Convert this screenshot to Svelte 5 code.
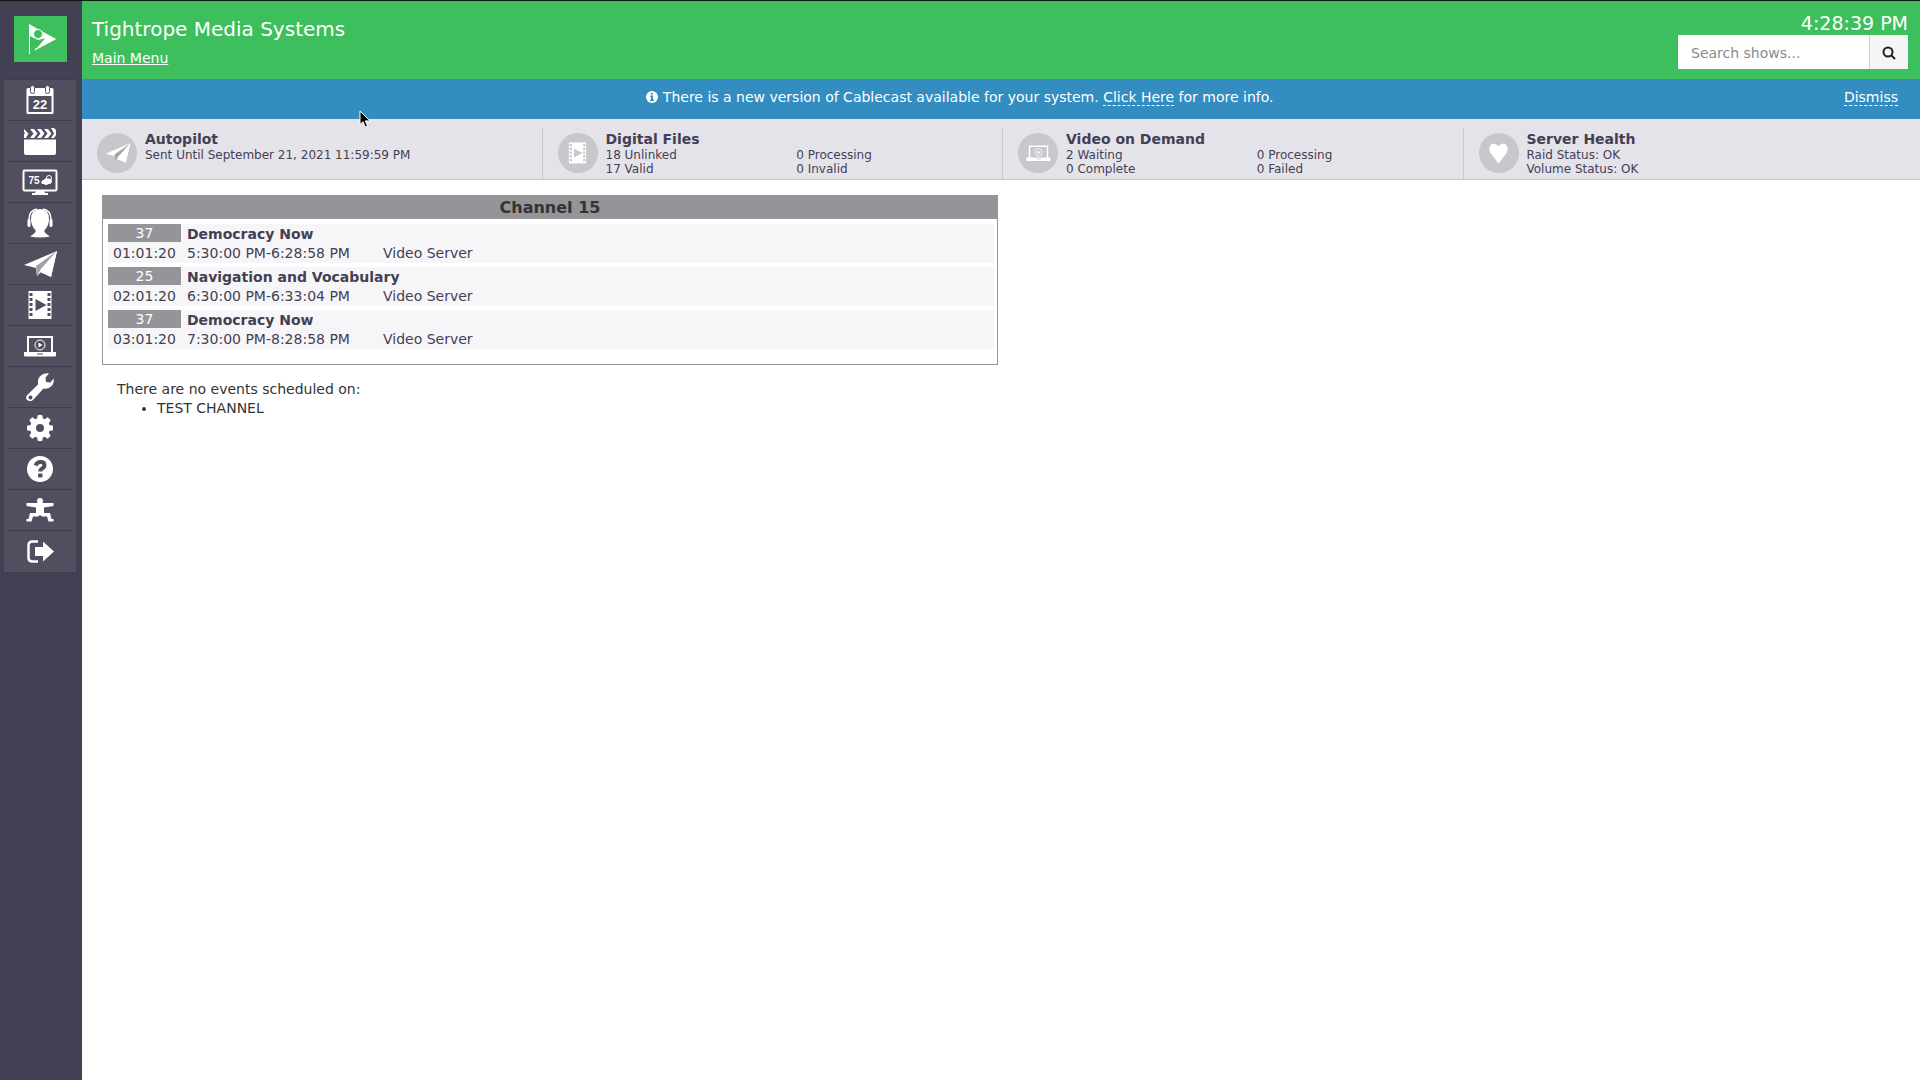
<script lang="ts">
  let search = ""
  let showNotice = true
  const time = "4:28:39 PM"

  const menu = [
    { name: "Schedule", icon: "calendar" },
    { name: "Shows", icon: "clapper" },
    { name: "Channel displays", icon: "display" },
    { name: "Contacts", icon: "person" },
    { name: "Autopilot", icon: "plane" },
    { name: "Digital files", icon: "film" },
    { name: "Video on demand", icon: "laptop" },
    { name: "Maintenance", icon: "wrench" },
    { name: "Settings", icon: "gear" },
    { name: "Help", icon: "help" },
    { name: "Force events", icon: "figure" },
    { name: "Log out", icon: "logout" }
  ]

  const stats = [
    { title: "Autopilot", icon: "plane", wide: true, values: ["Sent Until September 21, 2021 11:59:59 PM"] },
    { title: "Digital Files", icon: "film", wide: false, values: ["18 Unlinked", "0 Processing", "17 Valid", "0 Invalid"] },
    { title: "Video on Demand", icon: "laptop", wide: false, values: ["2 Waiting", "0 Processing", "0 Complete", "0 Failed"] },
    { title: "Server Health", icon: "heart", wide: true, values: ["Raid Status: OK", "Volume Status: OK"] }
  ]

  const events = [
    { id: 37, show: "Democracy Now", countdown: "01:01:20", run: "5:30:00 PM-6:28:58 PM", source: "Video Server" },
    { id: 25, show: "Navigation and Vocabulary", countdown: "02:01:20", run: "6:30:00 PM-6:33:04 PM", source: "Video Server" },
    { id: 37, show: "Democracy Now", countdown: "03:01:20", run: "7:30:00 PM-8:28:58 PM", source: "Video Server" }
  ]
  const emptyChannels = ["TEST CHANNEL"]
  const teeth = [0, 45, 90, 135, 180, 225, 270, 315]
  const holes = [2, 7, 12, 17, 22]
</script>

{#snippet icon(name)}
  <svg class="icon" viewBox="0 0 36 32" aria-hidden="true">
    {#if name === "calendar"}
      <path fill="currentColor" fill-rule="evenodd" d="M6 4h24q1.500 0 1.500 1.500v23q0 1.500-1.500 1.500H6q-1.500 0-1.500-1.500v-23Q4.500 4 6 4zM6.500 12v16h23V12z" />
      <rect class="ring" x="8.500" y="1.500" width="4" height="8" rx="2" />
      <rect class="ring" x="23.500" y="1.500" width="4" height="8" rx="2" />
      <text x="18" y="25" class="day">22</text>
    {:else if name === "clapper"}
      <path fill="currentColor" d="M2 14.500h32V28q0 2-2 2H4q-2 0-2-2z" />
      <path fill="currentColor" d="M2 4l4.500 4.500L4 13H2V9.500L3 8 2 7zM8 4h4l3.500 4.500L12 13H8l3.500-4.500zM15 4h4l3.500 4.500L19 13h-4l3.500-4.500zM22 4h4l3.500 4.500L26 13h-4l3.500-4.500zM29 3h3l2 2v5l-2 3h-3l3-4.500z" />
    {:else if name === "display"}
      <rect x="1.500" y="4.500" width="33" height="20" rx="1" fill="none" stroke="currentColor" stroke-width="2" />
      <path fill="currentColor" d="M14 25h8l1 2h3v2H10v-2h3z" />
      <text x="6.500" y="18" class="temp">75</text>
      <path fill="currentColor" d="M20 18q-2-3 1.500-4 2-2.500 4-1.500 4.500-.5 4.500 2.500-.5 3.500-3.500 3-3 2-4.500 0z" />
      <circle cx="27" cy="12" r="2.500" fill="none" stroke="currentColor" stroke-width="1" />
    {:else if name === "person"}
      <path fill="currentColor" d="M9 12Q9 2 18 2t9 10q0 7-4.500 11v2q2 2.500 5.500 4.500-5 1-10 1t-10-1q3.500-2 5.500-4.500v-2Q9 19 9 12z" />
      <path fill="none" stroke="currentColor" stroke-width="1.500" d="M7 13Q7 3 15 2M29 13Q29 3 21 2" />
      <rect x="5.500" y="12" width="3" height="8" rx="1.500" fill="currentColor" />
      <rect x="27.500" y="12" width="3" height="8" rx="1.500" fill="currentColor" />
    {:else if name === "plane"}
      <path fill="currentColor" d="M2 17L35 3 29 29l-10-5-4 4-1-8z" />
      <path class="fold" d="M35 3L14 18l1 10 4-7z" />
      <path fill="currentColor" d="M35 3L18.500 22l-.5 2L29 29z" />
    {:else if name === "film"}
      <rect x="6.500" y="2" width="23" height="28" fill="currentColor" />
      {#each holes as y}
        <rect class="cut" x="7.500" y={y + 2} width="3" height="3" />
        <rect class="cut" x="25.500" y={y + 2} width="3" height="3" />
      {/each}
      <path class="cut" d="M13.500 10v12L24.500 16z" />
    {:else if name === "laptop"}
      <path fill="currentColor" fill-rule="evenodd" d="M5 6h26v16h3v3.500q0 1-1 1H3q-1 0-1-1V22h3zM7 8v14h22V8z" />
      <circle cx="18" cy="15" r="5" fill="none" stroke="currentColor" stroke-width="1" />
      <path fill="currentColor" d="M16.500 12.500v5l4-2.500z" />
      <rect class="cut" x="15" y="23.500" width="6" height="1" />
    {:else if name === "wrench"}
      <path fill="currentColor" fill-rule="evenodd" d="M4.800 24.500L16 13.500Q15 7 19.500 4q3.500-2.500 7.500-1.500l-3.500 4 .5 4.500 4.500.5 3-4q1 5-2.500 8t-7.500 2L11.500 28.500q-2.500 2.500-5.500 1t-1.200-5zM6.500 26.500a2 2 0 1 0 4 0 2 2 0 1 0-4 0z" />
    {:else if name === "gear"}
      <g fill="currentColor">
        {#each teeth as angle}
          <path d="M14.800 8l1-5h4.400l1 5z" transform="rotate({angle} 18 16)" />
        {/each}
      </g>
      <circle cx="18" cy="16" r="7" fill="none" stroke="currentColor" stroke-width="6" />
    {:else if name === "help"}
      <circle cx="18" cy="16" r="13" fill="currentColor" />
      <path class="ask" d="M13.500 12.500q1.500-3.500 5-3.500 4 0 4 3.200 0 2-2.300 3.200-1.900 1-1.900 3.100" />
      <rect class="cut" x="16" y="20.500" width="4.500" height="4" rx="1" />
    {:else if name === "figure"}
      <circle cx="18" cy="7" r="3" fill="currentColor" />
      <path fill="currentColor" d="M4.500 9h27v3L22 13.500V19h6l1.500 6h2v2.500h-5L25 22.500h-5L18 21l-2 1.500h-5l-1.500 5h-5V25h2L8 19h6v-5.500L4.500 12z" />
    {:else if name === "logout"}
      <path fill="none" stroke="currentColor" stroke-width="2.500" d="M16 6.500h-5.500q-4 0-4 4v12q0 4 4 4H16" />
      <path fill="currentColor" d="M13 12h8V6.500l11 10-11 10V21h-8z" />
    {:else if name === "heart"}
      <path fill="currentColor" d="M18 30L8 17Q4 11 7 6q5-6 11 1 6-7 11-1 3 5-1 11z" />
    {/if}
  </svg>
{/snippet}

<div class="app">
  <nav class="sidebar">
    <a class="logo" href="#home" aria-label="Home">
      <svg viewBox="0 0 53 46" aria-hidden="true">
        <path fill="#fff" d="M15 8l27 15-21 11v-5l3-4-8-4v17h-1z" />
        <path fill="#3dbf5d" d="M16 20l8 4 9-2-10 10-7 2z" />
        <path fill="#fff" d="M20 35l22-12-9-3-9 11z" />
        <circle cx="24" cy="18" r="4.500" fill="#3dbf5d" stroke="#fff" />
      </svg>
    </a>
    <ul class="menu">
      {#each menu as item}
        <li><a href="#{item.icon}" aria-label={item.name}>{@render icon(item.icon)}</a></li>
      {/each}
    </ul>
  </nav>

  <div class="page">
    <header>
      <div class="titles">
        <h1>Tightrope Media Systems</h1>
        <a href="#menu">Main Menu</a>
      </div>
      <div class="tools">
        <time>{time}</time>
        <form on:submit|preventDefault>
          <input type="text" placeholder="Search shows..." aria-label="Search shows" bind:value={search}>
          <button type="submit" aria-label="Search">
            <svg viewBox="0 0 14 14" aria-hidden="true">
              <circle cx="6" cy="6" r="4.500" />
              <path d="M9.500 9.500l3.500 3.500" />
            </svg>
          </button>
        </form>
      </div>
    </header>

    {#if showNotice}
      <div class="notice">
        <p>
          <svg viewBox="0 0 12 12" aria-hidden="true">
            <circle cx="6" cy="6" r="6" fill="#fff" />
            <path fill="#338dc0" d="M5 2h2v1.500H5zM4.200 4.500H7v4h.8V10H4.200V8.500H5V6h-.8z" />
          </svg>
          There is a new version of Cablecast available for your system. <a href="#update">Click Here</a> for more info.
        </p>
        <button class="dismiss" on:click={() => (showNotice = false)}>Dismiss</button>
      </div>
    {/if}

    <section class="stats">
      {#each stats as stat}
        <div class="stat">
          <span class="badge">{@render icon(stat.icon)}</span>
          <div class="stat-text">
            <h2>{stat.title}</h2>
            <div class="values" class:wide={stat.wide}>
              {#each stat.values as value}
                <span>{value}</span>
              {/each}
            </div>
          </div>
        </div>
      {/each}
    </section>

    <main>
      <div class="channels">
        <section class="channel">
          <h3>Channel 15</h3>
          <ul class="events">
            {#each events as event}
              <li>
                <span class="number">{event.id}</span>
                <strong>{event.show}</strong>
                <span class="countdown">{event.countdown}</span>
                <span>{event.run}</span>
                <span>{event.source}</span>
              </li>
            {/each}
          </ul>
        </section>
        <div class="empty">
          <p>There are no events scheduled on:</p>
          <ul>
            {#each emptyChannels as channel}
              <li>{channel}</li>
            {/each}
          </ul>
        </div>
      </div>
    </main>
  </div>

  <svg class="pointer" viewBox="0 0 12 18" aria-hidden="true">
    <path d="M1 1v13.500l3-2.800 2.200 5.300 2.300-1-2.200-5.100H11z" />
  </svg>
</div>

<style>
  :global(body) {
    margin: 0;
    background: #fff;
  }
  .app {
    display: flex;
    min-height: 100vh;
    box-sizing: border-box;
    border-top: 1px solid #0d1a14;
    font-family: Verdana, "DejaVu Sans", sans-serif;
    font-size: 14px;
    line-height: 19px;
    color: #333;
  }
  h1, h2, h3, p, ul {
    margin: 0;
    padding: 0;
  }
  .icon {
    display: block;
    width: 36px;
    height: 32px;
    color: #fff;
  }
  .day, .temp {
    fill: currentColor;
    font-family: "Liberation Sans", sans-serif;
    font-weight: bold;
    font-size: 13px;
  }
  .day {
    text-anchor: middle;
  }
  .temp {
    font-size: 10px;
  }
  .ring {
    fill: #fff;
    stroke: var(--cut);
    stroke-width: 1;
  }
  .cut {
    fill: var(--cut);
  }
  .fold {
    fill: var(--fold);
  }
  .ask {
    fill: none;
    stroke: var(--cut);
    stroke-width: 4;
  }

  .sidebar {
    --cut: #524e5f;
    --fold: #a19fa9;
    flex: none;
    width: 82px;
    background: #444053;
  }
  .logo {
    display: block;
    width: 53px;
    height: 46px;
    margin: 15px 14px 18px;
    background: #3dbf5d;
  }
  .logo svg {
    display: block;
  }
  .menu {
    list-style: none;
    width: 72px;
    margin: 0 4px;
    background: #524e5f;
    box-shadow: 0 0 2px #3a3648;
    padding: 0 4px;
    box-sizing: border-box;
  }
  .menu a {
    display: flex;
    height: 40px;
    align-items: center;
    justify-content: center;
    border-bottom: 1px solid #403c4e;
  }
  .menu li:last-child a {
    border-color: transparent;
  }

  .page {
    flex: 1;
    min-width: 0;
  }
  header {
    display: flex;
    justify-content: space-between;
    height: 78px;
    padding: 0 12px 0 10px;
    background: #3dbf5d;
    color: #fff;
  }
  .titles {
    padding-top: 14px;
  }
  h1 {
    font-size: 20px;
    line-height: 28px;
    font-weight: normal;
    margin-bottom: 6px;
  }
  header a {
    color: #fff;
  }
  .tools {
    display: flex;
    flex-direction: column;
    align-items: flex-end;
    padding-top: 10px;
  }
  time {
    font-size: 19px;
    line-height: 24px;
  }
  form {
    display: flex;
    width: 230px;
    height: 34px;
  }
  input, form button {
    box-sizing: border-box;
    border: 0;
    border-radius: 0;
    font: inherit;
  }
  input {
    flex: 1;
    min-width: 0;
    padding: 2px 13px 0;
    background: #fff;
    color: #333;
  }
  input::placeholder {
    color: #8a8a8a;
    opacity: 1;
  }
  form button {
    display: flex;
    align-items: center;
    justify-content: center;
    width: 39px;
    padding: 2px 0 0;
    background: #f5f5f8;
    border-left: 1px solid #ccc;
  }
  form svg {
    width: 14px;
    fill: none;
    stroke: #222;
    stroke-width: 2;
  }

  .notice {
    display: flex;
    gap: 28px;
    height: 40px;
    padding: 9px 22px 0;
    box-sizing: border-box;
    background: #338dc0;
    color: #fff;
  }
  .notice p {
    flex: 1;
    text-align: center;
  }
  .notice svg {
    width: 12px;
    vertical-align: -1px;
  }
  .notice a, .dismiss {
    color: #fff;
    text-decoration: none;
    border: 0;
    border-bottom: 1px dashed #fff;
  }
  .dismiss {
    height: 18px;
    padding: 0;
    background: none;
    font: inherit;
    cursor: pointer;
  }

  .stats {
    --cut: #c8c7cc;
    --fold: #a5a4aa;
    display: flex;
    overflow: hidden;
    padding-top: 9px;
    background: #e4e3ea;
    border-bottom: 1px solid #c8c7cc;
    color: #444053;
  }
  .stat {
    flex: 0 0 25%;
    display: flex;
    height: 51px;
    border-left: 1px solid #c8c7cc;
  }
  .stat:first-child {
    border-left: 0;
  }
  .badge {
    display: flex;
    flex: none;
    align-items: center;
    justify-content: center;
    width: 40px;
    height: 40px;
    margin: 5px 8px 0 15px;
    border-radius: 50%;
    background: #c8c7cc;
  }
  .badge .icon {
    width: 27px;
    height: 24px;
  }
  .stat-text {
    flex: 1;
    padding-right: 15px;
  }
  h2 {
    font-size: 14px;
    line-height: 18px;
    padding-top: 2px;
  }
  .values {
    display: grid;
    grid-template-columns: 1fr 1fr;
    font-size: 12px;
    line-height: 14px;
  }
  .values.wide {
    grid-template-columns: 1fr;
  }

  main {
    display: grid;
    grid-template-columns: 1fr 1fr;
    gap: 6px;
    padding: 15px 20px;
  }
  .channel {
    border: 1px solid #959499;
    padding-bottom: 11px;
  }
  h3 {
    font-size: 16px;
    line-height: 23px;
    text-align: center;
    background: #959499;
  }
  .events {
    list-style: none;
    padding: 5px 3px 0 5px;
  }
  .events li {
    display: grid;
    grid-template-columns: 73px 190px 1fr;
    column-gap: 6px;
    margin-bottom: 4px;
    background: #f6f6f9;
    color: #444053;
  }
  .events strong {
    grid-column: span 2;
    line-height: 20px;
  }
  .number, .countdown {
    text-align: center;
  }
  .number {
    height: 18px;
    background: #959499;
    color: #fff;
  }
  .empty {
    padding: 15px;
  }
  .empty li {
    margin-left: 40px;
  }

  .pointer {
    position: absolute;
    left: 359px;
    top: 110px;
    width: 12px;
    height: 18px;
    stroke: #fff;
    pointer-events: none;
  }
</style>
